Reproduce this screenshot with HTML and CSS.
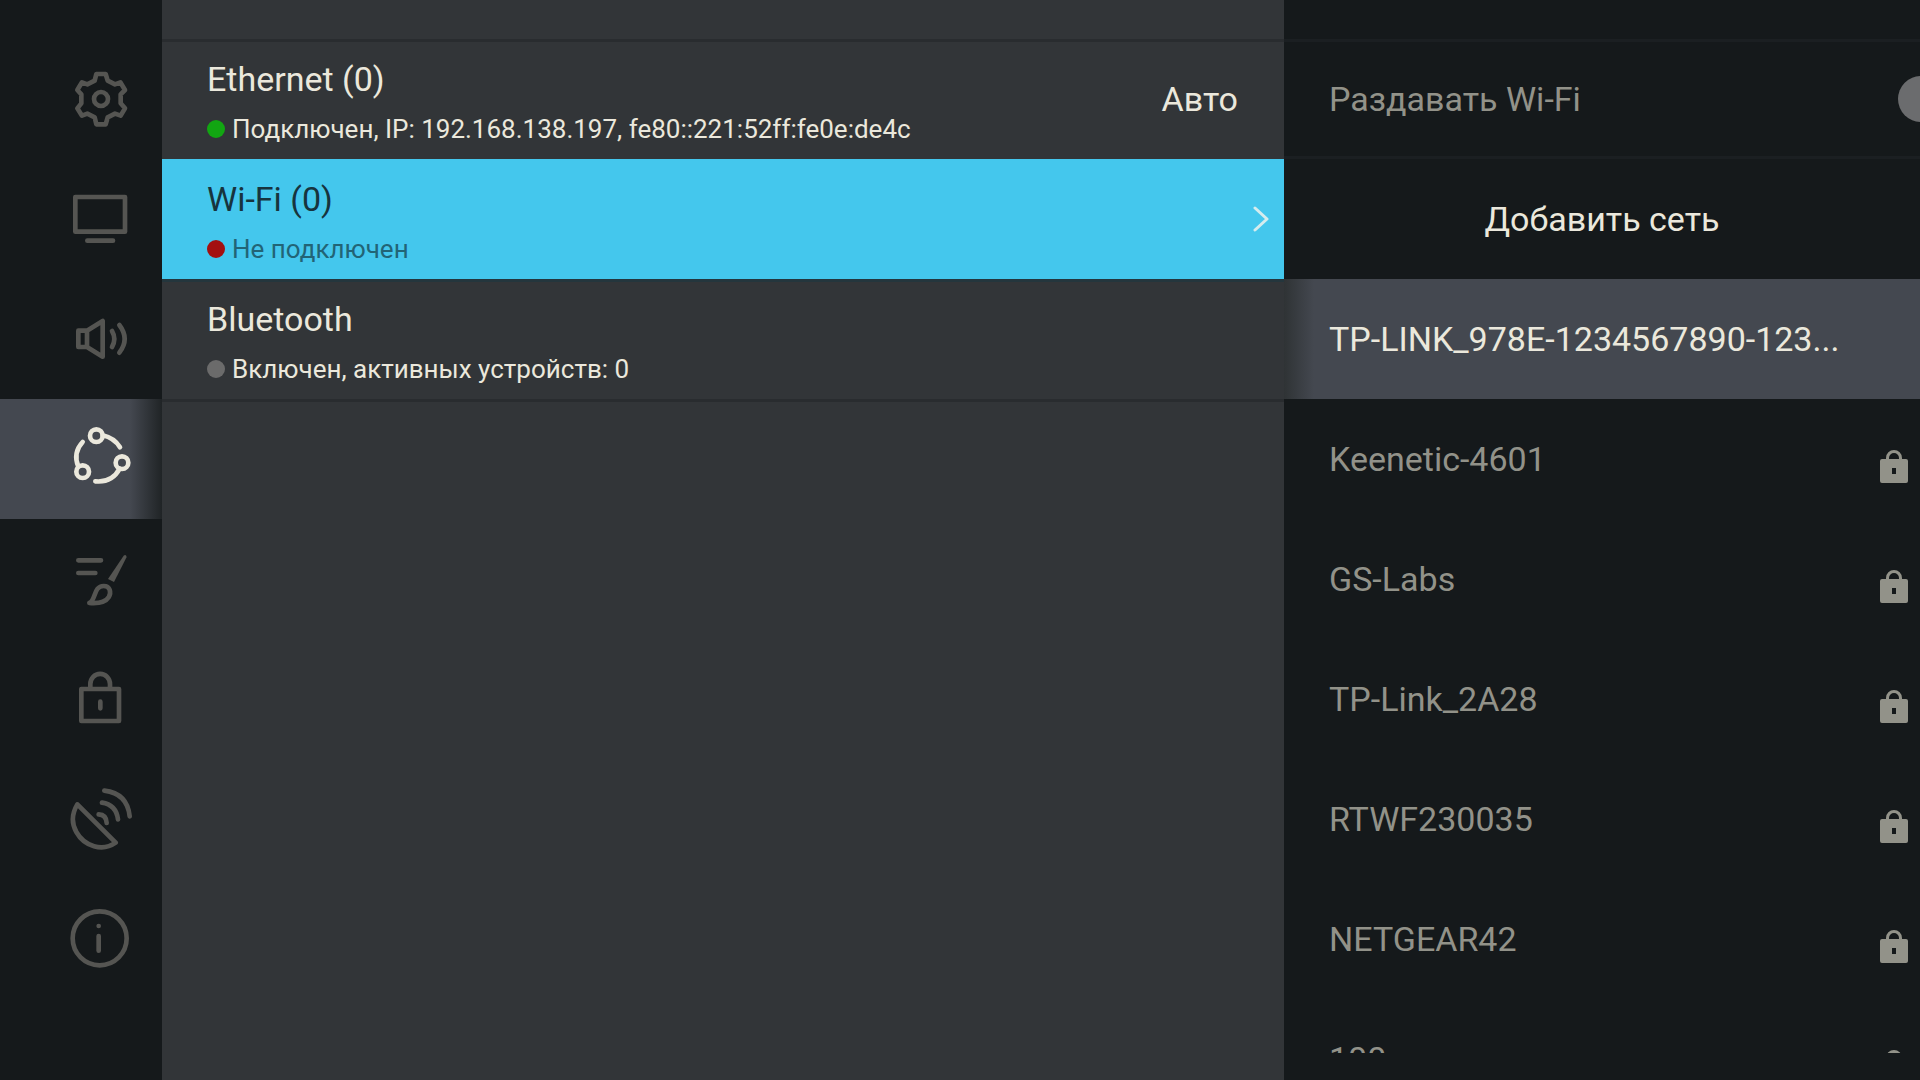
FILE: index.html
```html
<!DOCTYPE html>
<html lang="ru">
<head>
<meta charset="utf-8">
<meta name="viewport" content="width=device-width, initial-scale=1">
<title>Настройки сети</title>
<link rel="stylesheet" href="styles.css">
</head>
<body>
<svg class="sprite" aria-hidden="true">
  <symbol id="lock" viewBox="0 0 28 33">
    <path fill="currentColor" fill-rule="evenodd" d="M2 9H26Q28 9 28 11V31Q28 33 26 33H2Q0 33 0 31V11Q0 9 2 9ZM12 18V24H16V18Z"/>
    <path fill="none" stroke="currentColor" stroke-width="3" d="M7.500 10V8A6.500 6.500 0 0 1 20.500 8V10"/>
  </symbol>
</svg>
<div class="app">
  <nav class="sidebar" aria-label="Разделы">
    <button class="section" type="button" aria-label="Общие">
      <svg class="section-icon" viewBox="207 81 192 192">
        <path d="M289 102H317L323 122 345 133 361 127 375 150 362 163V190L375 205 362 227 345 221 323 232 317 253H289L284 232 262 221 246 227 232 205 244 190V163L232 150 246 127 262 133 284 122Z"/>
        <circle cx="303" cy="177" r="21"/>
      </svg>
    </button>
    <button class="section" type="button" aria-label="Экран">
      <svg class="section-icon" viewBox="207 441 192 192">
        <path d="M226 471H375V575H226ZM262 602H339"/>
      </svg>
    </button>
    <button class="section" type="button" aria-label="Звук">
      <svg class="section-icon" viewBox="207 801 192 192">
        <path d="M235 872H261V921H235ZM261 872 308 843V950L261 921M336 873Q350 897 336 921M358 855Q390 897 358 938"/>
      </svg>
    </button>
    <button class="section section-active" type="button" aria-label="Сеть" aria-current="page">
      <svg class="section-icon" viewBox="207 141 192 192">
        <circle cx="289" cy="167" r="19"/>
        <circle cx="366" cy="248" r="19"/>
        <circle cx="248" cy="275" r="19"/>
        <path d="M308 166Q343 174 360 202M359 266Q336 309 286 304M235 260Q218 218 248 186"/>
      </svg>
    </button>
    <button class="section" type="button" aria-label="Оформление">
      <svg class="section-icon" viewBox="207 501 192 192">
        <path d="M235 541H303M235 579H286"/>
        <path d="M268 669C288 661 280 618 311 618C330 618 335 637 326 652C315 669 292 671 268 669Z"/>
        <path class="solid" d="M371 527Q378 522 380 531L342 606 324 597Z"/>
      </svg>
    </button>
    <button class="section" type="button" aria-label="Блокировка">
      <svg class="section-icon" viewBox="207 861 192 192">
        <path d="M244 927H357V1023H244ZM271 927V912A29 30 0 0 1 330 912V927M301 965V985"/>
      </svg>
    </button>
    <button class="section" type="button" aria-label="Антенна">
      <svg class="section-icon" viewBox="207 261 192 192">
        <path d="M232 313 347 428C307 456 253 439 229 396C211 364 219 335 232 313ZM313 272Q382 280 389 349M306 308Q348 314 354 358M296 343Q319 344 320 369"/>
      </svg>
    </button>
    <button class="section" type="button" aria-label="Информация">
      <svg class="section-icon" viewBox="207 621 192 192">
        <circle cx="299" cy="715" r="81"/>
        <circle class="solid" cx="296" cy="678" r="7"/>
        <path d="M296 708V752"/>
      </svg>
    </button>
  </nav>

  <main class="connections">
    <button class="connection" type="button">
      <span class="info">
        <span class="name">Ethernet (0)</span>
        <span class="status"><span class="dot dot-on"></span>Подключен, IP: 192.168.138.197, fe80::221:52ff:fe0e:de4c</span>
      </span>
      <span class="mode">Авто</span>
    </button>
    <button class="connection connection-active" type="button" aria-expanded="true">
      <span class="info">
        <span class="name">Wi-Fi (0)</span>
        <span class="status"><span class="dot dot-off"></span>Не подключен</span>
      </span>
      <svg class="chevron" viewBox="0 0 16 26"><path d="M2 2 14 13 2 24"/></svg>
    </button>
    <button class="connection" type="button">
      <span class="info">
        <span class="name">Bluetooth</span>
        <span class="status"><span class="dot"></span>Включен, активных устройств: 0</span>
      </span>
    </button>
    <div class="connections-end"></div>
  </main>

  <aside class="wifi">
    <div class="share">
      <label for="share-wifi">Раздавать Wi-Fi</label>
      <input class="switch" id="share-wifi" type="checkbox">
    </div>
    <button class="add" type="button">Добавить сеть</button>
    <ul class="networks">
      <li><button class="network network-active" type="button"><span class="ssid">TP-LINK_978E-1234567890-123...</span></button></li>
      <li><button class="network" type="button"><span class="ssid">Keenetic-4601</span><svg class="lock"><use href="#lock"/></svg></button></li>
      <li><button class="network" type="button"><span class="ssid">GS-Labs</span><svg class="lock"><use href="#lock"/></svg></button></li>
      <li><button class="network" type="button"><span class="ssid">TP-Link_2A28</span><svg class="lock"><use href="#lock"/></svg></button></li>
      <li><button class="network" type="button"><span class="ssid">RTWF230035</span><svg class="lock"><use href="#lock"/></svg></button></li>
      <li><button class="network" type="button"><span class="ssid">NETGEAR42</span><svg class="lock"><use href="#lock"/></svg></button></li>
      <li><button class="network" type="button"><span class="ssid">100</span><svg class="lock"><use href="#lock"/></svg></button></li>
    </ul>
  </aside>
</div>
</body>
</html>
```
FILE: styles.css
```css
:root {
  --dark: #15191b;
  --panel: #323538;
  --line: #292c2f;
  --line-dark: #1b1f22;
  --selected: #444850;
  --accent: #44c7ed;
  --text: #ebe8dc;
  --muted: #929289;
  --icon: #555552;
  --row: 120px;
}

* {
  box-sizing: border-box;
}

body {
  margin: 0;
  background: var(--dark);
  color: var(--text);
  font: 34px/40px Roboto, sans-serif;
}

button {
  width: 100%;
  border: 0;
  background: none;
  color: inherit;
  font: inherit;
  text-align: left;
}

.sprite {
  display: none;
}

.app {
  display: grid;
  grid-template-columns: 162px minmax(0, 1122fr) minmax(0, 636fr);
  height: 100vh;
  overflow: hidden;
}

.sidebar,
.connections,
.wifi {
  display: flex;
  flex-direction: column;
  min-height: 0;
  padding-top: 39px;
}

/* Sections */

.section {
  display: flex;
  flex: none;
  align-items: center;
  height: var(--row);
  padding: 0 0 0 69px;
  color: var(--icon);
}

.section-active {
  background: linear-gradient(to left, #202426, var(--selected) 32px);
  color: var(--text);
}

.section-icon {
  width: 64px;
  height: 64px;
  fill: none;
  stroke: currentColor;
  stroke-width: 14;
  stroke-linecap: round;
  stroke-linejoin: round;
}

.section-icon .solid {
  fill: currentColor;
  stroke: none;
}

/* Connections */

.connections {
  background: var(--panel);
}

.connection {
  display: flex;
  flex: none;
  align-items: center;
  gap: 24px;
  height: var(--row);
  padding: 0 46px 4px 45px;
  border-top: 3px solid var(--line);
}

.connection-active {
  padding-right: 15px;
  border-top-color: var(--accent);
  background: var(--accent);
  color: #17343e;
}

.connection-active .status {
  color: #226476;
}

.connection-active + .connection {
  border-top-color: #24363d;
}

.connections-end {
  border-top: 3px solid var(--line);
}

.info {
  display: flex;
  flex: 1;
  flex-direction: column;
  align-self: flex-start;
  gap: 14px;
  min-width: 0;
  padding-top: 17px;
}

.status {
  display: flex;
  align-items: center;
  gap: 7px;
  font-size: 26px;
  line-height: 32px;
  white-space: nowrap;
}

.dot {
  flex: none;
  width: 18px;
  height: 18px;
  border-radius: 50%;
  background: #6b6b6b;
}

.dot-on {
  background: #12a612;
}

.dot-off {
  background: #a31010;
}

.chevron {
  width: 16px;
  height: 26px;
  fill: none;
  stroke: #d5ecee;
  stroke-width: 3;
  stroke-linecap: round;
  stroke-linejoin: round;
}

/* Wi-Fi networks */

.wifi {
  padding-bottom: 27px;
}

.share {
  display: flex;
  flex: none;
  align-items: center;
  justify-content: space-between;
  height: var(--row);
  padding-left: 45px;
  border: solid var(--line-dark);
  border-width: 3px 0;
  color: var(--muted);
}

.switch {
  flex: none;
  width: 80px;
  height: 46px;
  margin: 0 -58px 0 0;
  border-radius: 23px;
  background: #6b6c6e;
  appearance: none;
}

.add {
  flex: none;
  height: var(--row);
  text-align: center;
}

.networks {
  flex: 1;
  min-height: 0;
  margin: 0;
  padding: 0;
  overflow: hidden;
  list-style: none;
}

.network {
  display: flex;
  align-items: center;
  height: var(--row);
  padding: 0 12px 0 45px;
  color: var(--muted);
}

.network-active {
  background: linear-gradient(to right, #2f3335, var(--selected) 30px);
  color: var(--text);
}

.ssid {
  flex: 1;
  white-space: nowrap;
}

.lock {
  width: 28px;
  height: 33px;
  margin-top: 14px;
}
```
